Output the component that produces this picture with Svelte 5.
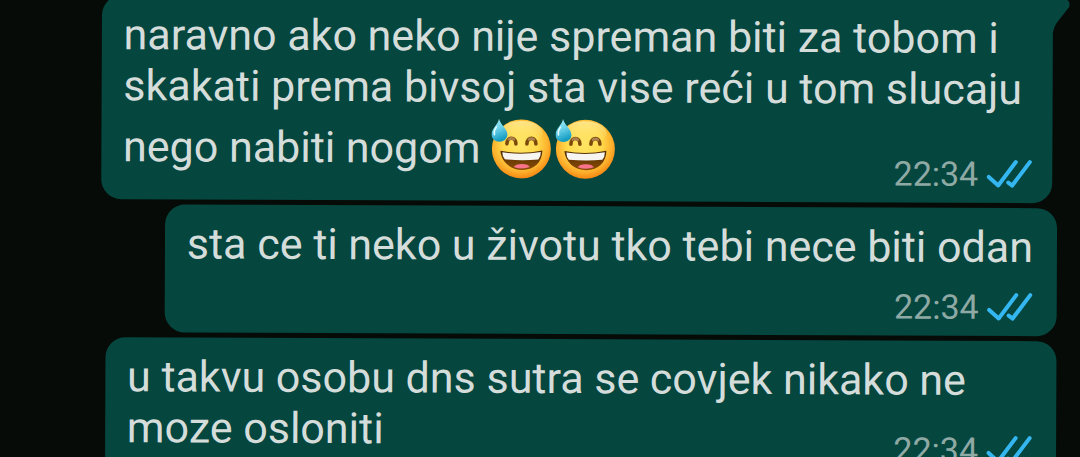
<script>
  const messages = [
    {
      text: 'naravno ako neko nije spreman biti za tobom i skakati prema bivsoj sta vise reći u tom slucaju nego nabiti nogom',
      emojis: 2,
      time: '22:34',
      tail: true,
      wide: true
    },
    { text: 'sta ce ti neko u životu tko tebi nece biti odan', emojis: 0, time: '22:34', tail: false, wide: false },
    { text: 'u takvu osobu dns sutra se covjek nikako ne moze osloniti', emojis: 0, time: '22:34', tail: false, wide: true }
  ];
</script>

<svg class="defs" aria-hidden="true">
  <defs>
    <radialGradient id="face" cx="0.48" cy="0.42" r="0.6">
      <stop offset="0" stop-color="#ffe565" />
      <stop offset="0.5" stop-color="#ffd94a" />
      <stop offset="0.78" stop-color="#fdb12d" />
      <stop offset="1" stop-color="#f2800e" />
    </radialGradient>
    <linearGradient id="shine" x1="0" y1="0" x2="0" y2="1">
      <stop offset="0" stop-color="#fff3ae" stop-opacity="0.7" />
      <stop offset="1" stop-color="#ffe565" stop-opacity="0" />
    </linearGradient>
    <linearGradient id="drop" x1="0" y1="0" x2="0.3" y2="1">
      <stop offset="0" stop-color="#b5f0fa" />
      <stop offset="0.5" stop-color="#6bd2ea" />
      <stop offset="1" stop-color="#159cc2" />
    </linearGradient>
    <linearGradient id="mouth" x1="0" y1="0" x2="0" y2="1">
      <stop offset="0" stop-color="#4c2b05" />
      <stop offset="1" stop-color="#8a4c04" />
    </linearGradient>
  </defs>
</svg>

<main class="chat">
  {#each messages as m}
    <article class="bubble" class:wide={m.wide} class:first={m.tail}>
      {#if m.tail}
        <svg class="tail" viewBox="0 0 18 34" aria-hidden="true">
          <path d="M0 0H14Q19 2 17 8L6 22Q2 27 1 34H0Z" />
        </svg>
      {/if}
      <p>
        {m.text}
        {#if m.emojis}
          <span class="emojis">
            {#each Array(m.emojis) as _}
              <svg class="emoji" viewBox="0 0 60 60" role="img" aria-label="😅">
                <circle cx="30" cy="30" r="29.5" fill="url(#face)" />
                <ellipse cx="30" cy="14" rx="21" ry="12" fill="url(#shine)" />
                <path d="M15.500 25C15.500 17.500 24.500 17.500 24.500 25M35.500 25C35.500 17.500 44.500 17.500 44.500 25" fill="none" stroke="#7b4a0b" stroke-width="3.6" stroke-linecap="round" />
                <path d="M17.500 20.500Q20 18.500 22.500 20.500M37.500 20.500Q40 18.500 42.500 20.500" fill="none" stroke="#ad8050" stroke-width="2.5" stroke-linecap="round" />
                <path d="M9 32Q30 36 51 31.500C51 43 43 51 31 51S10 43 9 32Z" fill="url(#mouth)" />
                <path d="M11 33.500Q30 36.500 49.500 33Q49.500 38 47 40.500Q30 42 13.500 40.500Q11 38 11 33.500Z" fill="#f7f5f2" />
                <path d="M22.500 48Q24 45 30.500 45T38.500 48Q31 51 22.500 48Z" fill="#f9738a" />
                <path d="M7.500 0C9 6 16 10 16 16A8 7 0 0 1 0 16C0 10 6.500 6 7.500 0Z" fill="url(#drop)" />
                <path d="M5 8Q2 12 3 16" fill="none" stroke="#dffbff" stroke-width="1.500" stroke-linecap="round" />
              </svg>
            {/each}
          </span>
        {/if}
      </p>
      <footer>
        <time>{m.time}</time>
        <svg class="ticks" viewBox="0 0 46 30" role="img" aria-label="✓✓">
          <path d="M2.500 18L12 26.500L29.500 3M22 23.500L26 26.500L43.500 3" />
        </svg>
      </footer>
    </article>
  {/each}
</main>

<style>
  :global(body) {
    margin: 0;
    background: #060b07;
    overflow: hidden;
  }
  .defs {
    position: absolute;
    width: 0;
    height: 0;
  }
  .chat {
    display: flex;
    flex-direction: column;
    align-items: flex-end;
    gap: 5px;
    margin-top: -3px;
    padding-right: 23px;
    font-family: Roboto, sans-serif;
    color: #d5dddb;
    transform: rotate(0.25deg);
  }
  .bubble {
    position: relative;
    box-sizing: border-box;
    max-width: 90%;
    padding: 14px 24px 12px 22px;
    border-radius: 20px;
    background: #05463f;
  }
  .wide {
    width: 90%;
  }
  .first {
    margin-right: 5px;
    padding-right: 20px;
    border-top-right-radius: 0;
  }
  .bubble p {
    margin: 0;
    font-size: 43px;
    line-height: 51px;
  }
  .emojis {
    display: inline-flex;
    gap: 4px;
    padding-top: 6px;
    vertical-align: -16px;
  }
  .emoji {
    display: block;
    width: 60px;
    height: 60px;
  }
  footer {
    display: flex;
    align-items: center;
    justify-content: flex-end;
    gap: 8px;
    height: 34px;
    margin-top: 17px;
    font-size: 34px;
    line-height: 34px;
    color: #8fa9a4;
  }
  .wide footer {
    margin-top: -24px;
  }
  .ticks {
    width: 46px;
    height: 30px;
    fill: none;
    stroke: #34b7f1;
    stroke-width: 4;
    stroke-linecap: round;
    stroke-linejoin: round;
  }
  .tail {
    position: absolute;
    top: 0;
    right: -17px;
    width: 18px;
    height: 34px;
    fill: #05463f;
  }
</style>
